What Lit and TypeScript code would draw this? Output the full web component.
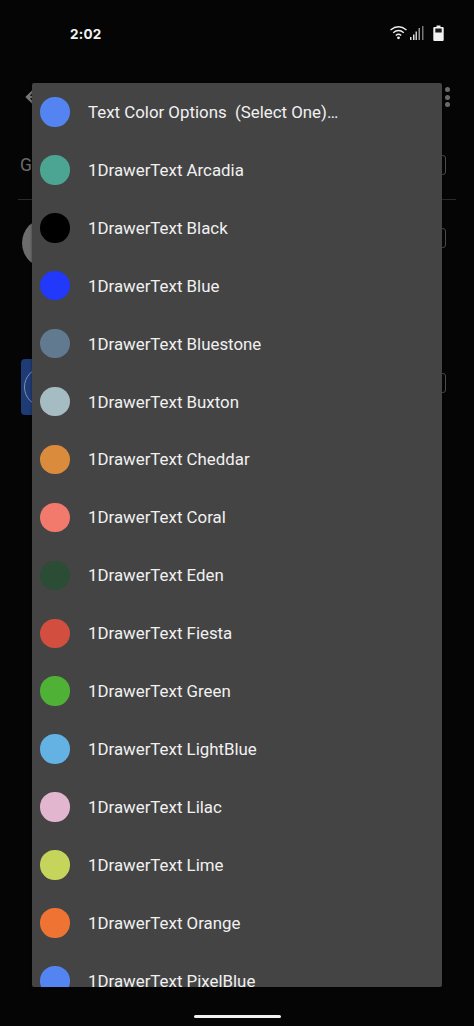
import { LitElement, html, css, svg } from "lit";
import { customElement } from "lit/decorators.js";

const items: [string, string][] = [
  ["Text Color Options  (Select One)…", "#5384f1"],
  ["1DrawerText Arcadia", "#4ba592"],
  ["1DrawerText Black", "#000000"],
  ["1DrawerText Blue", "#2238fb"],
  ["1DrawerText Bluestone", "#627a90"],
  ["1DrawerText Buxton", "#a5bcc2"],
  ["1DrawerText Cheddar", "#da8c3c"],
  ["1DrawerText Coral", "#f27a6c"],
  ["1DrawerText Eden", "#2b4c35"],
  ["1DrawerText Fiesta", "#d24f3f"],
  ["1DrawerText Green", "#4fb136"],
  ["1DrawerText LightBlue", "#63b2e3"],
  ["1DrawerText Lilac", "#e3b6d0"],
  ["1DrawerText Lime", "#c5d55c"],
  ["1DrawerText Orange", "#ef7434"],
  ["1DrawerText PixelBlue", "#5384f1"],
];

@customElement("app-root")
export class AppRoot extends LitElement {
  static styles = css`
    :host {
      display: block;
      width: 474px;
      height: 1026px;
      overflow: hidden;
      background: #050505;
      font-family: Roboto, "Liberation Sans", sans-serif;
    }
    .page {
      position: relative;
      width: 474px;
      height: 1026px;
      display: flex;
      flex-direction: column;
    }
    .status {
      height: 66px;
      flex: none;
      display: flex;
      align-items: center;
      justify-content: space-between;
      padding: 0 30px 0 70px;
      box-sizing: border-box;
    }
    .time {
      color: #f2f2f2;
      font: 700 13.5px Inter, Roboto, sans-serif;
      letter-spacing: 0.2px;
      margin-top: 2px;
    }
    .status-icons {
      display: flex;
      align-items: center;
      gap: 9px;
    }
    .status-icons svg { display: block; }
    .under-head {
      height: 62px;
      flex: none;
      display: flex;
      align-items: center;
      justify-content: space-between;
      padding: 0 24px;
      box-sizing: border-box;
    }
    .dots {
      display: flex;
      flex-direction: column;
      gap: 2.5px;
    }
    .dots i {
      width: 5px;
      height: 5px;
      border-radius: 50%;
      background: #6a6a6a;
      display: block;
    }
    .under-row {
      display: flex;
      align-items: center;
      justify-content: space-between;
      padding-right: 28px;
      flex: none;
    }
    .g {
      color: #6b6b6b;
      font-size: 17.5px;
      margin-left: 20px;
    }
    .box {
      width: 32px;
      height: 20px;
      box-sizing: border-box;
      border: 1.5px solid #4a4a4a;
      border-radius: 3px;
    }
    .row-g { height: 69px; margin-top: 2px; }
    .divider {
      height: 1px;
      flex: none;
      margin: 0 18px;
      background: #2a2a2a;
    }
    .row-a { height: 76px; }
    .avatar {
      width: 50px;
      height: 50px;
      margin: 10px 0 0 22px;
      border-radius: 50%;
      background: #6c6c6c;
    }
    .row-t { height: 64px; margin-top: 75px; }
    .tile {
      width: 50px;
      height: 56px;
      margin: 8px 0 0 21px;
      border-radius: 4px;
      background: #1e3b75;
      box-sizing: border-box;
      padding: 8px 0 0 3px;
    }
    .ring {
      width: 40px;
      height: 40px;
      border: 1.5px solid #7f8fb0;
      border-radius: 50%;
      box-sizing: border-box;
    }
    .menu {
      position: absolute;
      left: 32px;
      top: 83px;
      width: 410px;
      height: 904px;
      background: #444444;
      border-radius: 2px;
      overflow: hidden;
      box-shadow: 0 0 3px rgba(0, 0, 0, 0.4);
    }
    .item {
      height: 57.93px;
      display: flex;
      align-items: center;
      padding-left: 8px;
    }
    .swatch {
      width: 29.5px;
      height: 29.5px;
      border-radius: 50%;
      flex: none;
      margin-right: 18.5px;
    }
    .label {
      color: #f1f1f1;
      font-size: 16.85px;
      white-space: pre;
    }
    .home {
      position: absolute;
      left: 194px;
      top: 1015px;
      width: 87px;
      height: 3px;
      border-radius: 2px;
      background: #f0f0f0;
    }
  `;

  render() {
    return html`
      <div class="page">
        <div class="status">
          <span class="time">2:02</span>
          <div class="status-icons">
            <svg width="34" height="16" viewBox="0 0 34 16">
              ${svg`
                <path d="M0.500 5 Q8.500 -1.500 16.500 5 M3.200 7.800 Q8.500 3.200 13.800 7.800 M5.800 10.400 Q8.500 8 11.200 10.400" fill="none" stroke="#eee" stroke-width="1.300"/>
                <circle cx="8.500" cy="12.800" r="1.400" fill="#eee"/>
                <rect x="20" y="12" width="1.500" height="3" fill="#ddd"/>
                <rect x="23" y="9.500" width="1.500" height="5.500" fill="#ddd"/>
                <rect x="25.500" y="6.500" width="1.500" height="8.500" fill="#ccc"/>
                <rect x="28.500" y="3" width="1.500" height="12" fill="#999"/>
                <rect x="32" y="1" width="1.500" height="14" fill="#777"/>
              `}
            </svg>
            <svg width="11" height="16" viewBox="0 0 11 16">
              ${svg`
                <path d="M3.500 0.500h4v1.500h2.200a1 1 0 0 1 1 1V15a1 1 0 0 1-1 1H1.300a1 1 0 0 1-1-1V3a1 1 0 0 1 1-1H3.500z" fill="#f2f2f2"/>
                <rect x="2.300" y="3.500" width="6.400" height="4" fill="#1a1a1a"/>
              `}
            </svg>
          </div>
        </div>
        <div class="under-head">
          <svg width="16" height="16" viewBox="0 0 16 16">
            ${svg`<path d="M9 2 L3 8 L9 14 M3 8 H16" fill="none" stroke="#777" stroke-width="2.400"/>`}
          </svg>
          <div class="dots"><i></i><i></i><i></i></div>
        </div>
        <div class="under-row row-g">
          <span class="g">G</span>
          <div class="box"></div>
        </div>
        <div class="divider"></div>
        <div class="under-row row-a">
          <div class="avatar"></div>
          <div class="box"></div>
        </div>
        <div class="under-row row-t">
          <div class="tile"><div class="ring"></div></div>
          <div class="box"></div>
        </div>
        <div class="menu">
          ${items.map(
            ([label, color]) => html`
              <div class="item">
                <div class="swatch" style="background:${color}"></div>
                <span class="label">${label}</span>
              </div>
            `
          )}
        </div>
        <div class="home"></div>
      </div>
    `;
  }
}
